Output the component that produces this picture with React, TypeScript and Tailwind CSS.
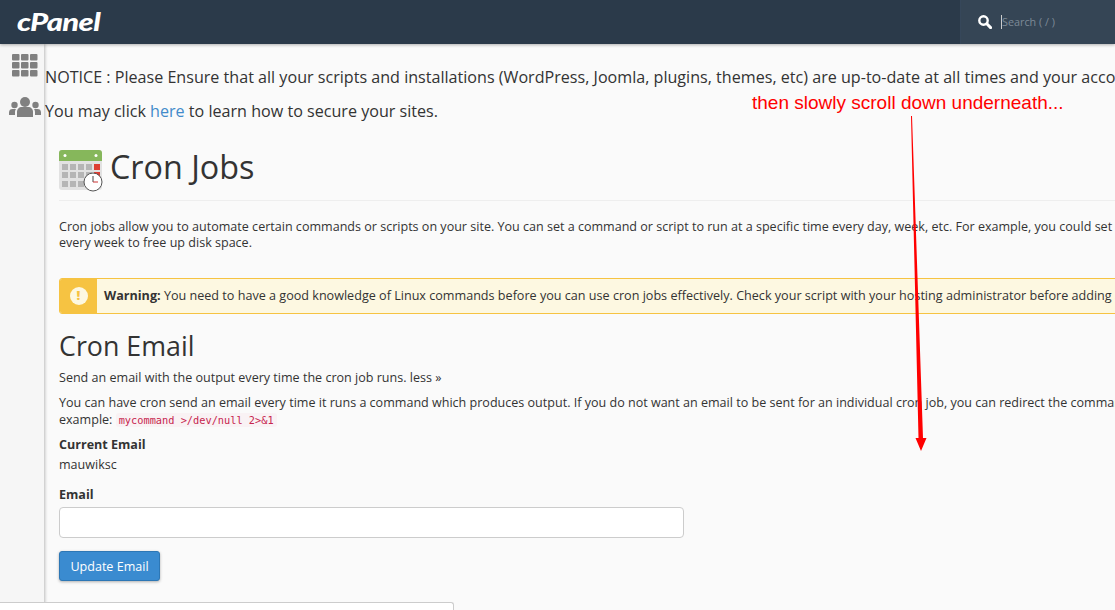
function GridIcon() {
  return (
    <svg width="26" height="23" viewBox="0 0 26 23" fill="#808080">
      {[0, 9, 18].map((x) =>
        [0, 8, 16].map((y) => <rect key={`${x}-${y}`} x={x} y={y} width="7.5" height="6.5" rx="1" />)
      )}
    </svg>
  )
}

function UsersIcon() {
  return (
    <svg width="32" height="20" viewBox="0 0 32 20" fill="#808080">
      <circle cx="16" cy="5" r="5" />
      <path d="M8 20v-5c0-3 2-5 5-5h6c3 0 5 2 5 5v5z" />
      <circle cx="5.500" cy="8" r="3.200" />
      <path d="M0 18v-2.500c0-2.500 1.500-3.500 3.500-3.500h3.500c-.7 1-1 2-1 3.500V18z" />
      <circle cx="26.500" cy="8" r="3.200" />
      <path d="M32 18v-2.500c0-2.500-1.500-3.500-3.500-3.500H25c.7 1 1 2 1 3.500V18z" />
    </svg>
  )
}

function CalendarIcon() {
  return (
    <svg className="mt-[2px]" width="44" height="42" viewBox="0 0 44 42">
      <rect x="0" y="0" width="43" height="40" rx="3" fill="#e2e2e2" />
      <path d="M0 11V3a3 3 0 0 1 3-3h37a3 3 0 0 1 3 3v8z" fill="#86b75b" />
      <circle cx="6" cy="5.500" r="1.500" fill="#fff" />
      <circle cx="37" cy="5.500" r="1.500" fill="#fff" />
      {[3, 11, 19, 27, 35].map((x) =>
        [14, 22, 31].map((y) => (
          <rect key={`${x}-${y}`} x={x} y={y} width="6" height="6" fill={x === 35 && y < 30 ? '#dd3f33' : '#b5b5b5'} />
        ))
      )}
      <circle cx="34" cy="32" r="9" fill="#fff" stroke="#555" strokeWidth="1" />
      <path d="M34 26v6" fill="none" stroke="#444" strokeWidth="1" />
      <path d="M34 32h5" stroke="#c33" strokeWidth="1" />
    </svg>
  )
}

function SearchIcon() {
  return (
    <svg width="14" height="14" viewBox="0 0 14 14" fill="none" stroke="#fff">
      <circle cx="5.500" cy="5.500" r="4.200" strokeWidth="2.400" />
      <path d="M8.800 8.800 12.600 12.600" strokeWidth="3" strokeLinecap="round" />
    </svg>
  )
}

export default function App() {
  return (
    <div className="relative h-[610px] w-[1115px] overflow-hidden bg-[#fafafa] font-['Open_Sans',sans-serif] text-[#333]">
      {/* Top bar */}
      <div className="relative z-20 flex h-[44px] items-center justify-between bg-[#2b3a4a] shadow-[0_1px_3px_rgba(0,0,0,0.3)]">
        <span className="ml-[17px] origin-left scale-x-[1.29] font-['Lato',sans-serif] text-[24px] font-black italic leading-none tracking-[-0.5px] text-white">cPanel</span>
        <div className="flex h-full w-[155px] items-center border-l border-[#36475a] bg-[#354555] pl-[17px]">
          <SearchIcon />
          <span className="-mt-[1px] ml-[9px] border-l border-[#ccc] text-[10.8px] leading-[14px] text-[#7d8a97]">Search ( / )</span>
        </div>
      </div>

      <div className="flex h-[566px]">
        {/* Sidebar */}
        <div className="z-10 flex w-[44px] shrink-0 flex-col items-center bg-[#f6f6f6] pl-[6px] pt-[10px] shadow-[1px_0_3px_rgba(0,0,0,0.25)]">
          <GridIcon />
          <div className="mt-[20px]">
            <UsersIcon />
          </div>
        </div>

        {/* Main */}
        <div className="ml-[1px] min-w-0 flex-1 whitespace-nowrap">
          <p className="mt-[22px] text-[16.12px] leading-[22px]">NOTICE : Please Ensure that all your scripts and installations (WordPress, Joomla, plugins, themes, etc) are up-to-date at all times and your account is secure.</p>
          <p className="mt-[12px] text-[16.12px] leading-[22px]">You may click <span className="text-[#428bca]">here</span> to learn how to secure your sites.</p>

          <div className="ml-[14px] mt-[18px]">
            <div className="flex h-[61px] items-center gap-[7px] border-b border-[#eee]">
              <CalendarIcon />
              <h1 className="-mt-[7px] text-[32.3px] leading-none">Cron Jobs</h1>
            </div>

            <p className="mt-[17px] text-[12.56px] leading-[17px]">Cron jobs allow you to automate certain commands or scripts on your site. You can set a command or script to run at a specific time every day, week, etc. For example, you could set a cron job to delete temporary files</p>
            <p className="-mt-[1px] text-[12.56px] leading-[17px]">every week to free up disk space.</p>

            <div className="mt-[27px] flex h-[36px] w-[1100px] overflow-hidden rounded-[3px] border border-[#f6c342] bg-[#fdf8e1] text-[12.6px]">
              <div className="flex w-[37px] shrink-0 items-center justify-center bg-[#f6c342]">
                <span className="flex h-[18px] w-[18px] items-center justify-center rounded-full bg-[#fdf8e1] text-[13px] font-extrabold text-[#f6c342]">!</span>
              </div>
              <p className="ml-[7px] self-center">
                <b className="font-bold">Warning:</b> You need to have a good knowledge of Linux commands before you can use cron jobs effectively. Check your script with your hosting administrator before adding a cron job.
              </p>
            </div>

            <h2 className="mt-[14px] text-[26.8px] leading-[36px]">Cron Email</h2>
            <p className="mt-[5px] text-[12.56px] leading-[17px]">Send an email with the output every time the cron job runs. less »</p>
            <p className="mt-[8px] text-[12.56px] leading-[17px]">You can have cron send an email every time it runs a command which produces output. If you do not want an email to be sent for an individual cron job, you can redirect the command's output to /dev/null. For</p>
            <p className="text-[12.56px] leading-[17px]">
              example: <code className="rounded-[3px] bg-[#f9f2f4] px-[3px] py-[1px] font-['DejaVu_Sans_Mono',monospace] text-[10.3px] text-[#c7254e]">mycommand &gt;/dev/null 2&gt;&amp;1</code>
            </p>

            <p className="mt-[7px] text-[12.56px] font-bold leading-[17px]">Current Email</p>
            <p className="mt-[3px] text-[12.56px] leading-[17px]">mauwiksc</p>
            <label className="mt-[13px] block text-[12.56px] font-bold leading-[17px]">Email</label>
            <input className="mt-[4px] block h-[31px] w-[625px] rounded-[4px] border border-[#ccc] bg-white" />
            <button className="mt-[13px] block h-[30px] w-[101px] rounded-[3px] border border-[#2d77b5] bg-[#3a8bd0] pt-[2px] text-[12.56px] text-white shadow-[0_1px_3px_rgba(0,0,0,0.3)]">Update Email</button>
            <h2 className="mt-[15px] text-[26.8px] leading-[36px]">Add New Cron Job</h2>
          </div>
        </div>
      </div>

      {/* Browser status bubble */}
      <div className="absolute bottom-0 left-0 z-30 h-[8px] w-[454px] overflow-hidden rounded-tr-[3px] border-r border-t border-[#ccc] bg-white pl-[4px] pt-[5px] text-[12px] leading-[14px] text-[#444]">Connecting...</div>

      {/* Red annotation drawn over the screenshot */}
      <span className="absolute left-[752px] top-[92px] z-30 font-['Liberation_Sans',sans-serif] text-[19px] leading-[22px] text-[#ff0000]">then slowly scroll down underneath...</span>
      <svg className="absolute left-[900px] top-[110px] z-30" width="40" height="345" viewBox="0 0 40 345">
        <path d="M11 6 L18.500 328 L15.500 328 L21 341 L26.500 328 L23 328 L12 6 Z" fill="#ff0000" />
      </svg>
    </div>
  )
}
